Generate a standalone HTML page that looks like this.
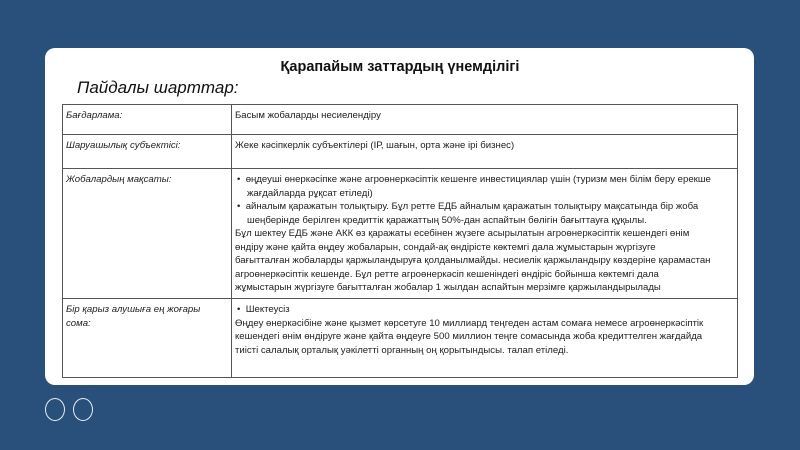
<!DOCTYPE html>
<html><head><meta charset="utf-8"><style>
*{margin:0;padding:0;box-sizing:border-box}
html,body{width:800px;height:450px;overflow:hidden}
body{background:#28507a;font-family:"Liberation Sans",sans-serif;position:relative}
.card{position:absolute;left:45px;top:48px;width:709px;height:337px;background:#fff;border-radius:10px}
h1{position:absolute;left:0;right:0;top:59px;text-align:center;font-size:14.5px;font-weight:bold;color:#111}
.sub{position:absolute;left:77px;top:78px;font-size:17px;font-style:italic;color:#111}
table{position:absolute;left:62px;top:104px;width:676px;border-collapse:collapse;font-size:9.6px;color:#222}
td{border:1px solid #555;vertical-align:top;padding:4px 3px 2px;line-height:13.5px}
td.r{padding-right:26px}
td.l{width:169px;font-style:italic;padding-right:20px}
.b{padding-left:12px;text-indent:-10px}
.c{position:absolute;top:398px;width:20px;height:23px;border:1.5px solid #e8eef5;border-radius:50%}
</style></head><body>
<div class="card"></div>
<h1>Қарапайым заттардың үнемділігі</h1>
<div class="sub">Пайдалы шарттар:</div>
<table>
<tr style="height:30px"><td class="l">Бағдарлама:</td><td class="r">Басым жобаларды несиелендіру</td></tr>
<tr style="height:34px"><td class="l">Шаруашылық субъектісі:</td><td class="r">Жеке кәсіпкерлік субъектілері (ІР, шағын, орта және ірі бизнес)</td></tr>
<tr style="height:130px"><td class="l">Жобалардың мақсаты:</td><td class="r"><div class="b">•&nbsp; өңдеуші өнеркәсіпке және агроөнеркәсіптік кешенге инвестициялар үшін (туризм мен білім беру ерекше жағдайларда рұқсат етіледі)</div><div class="b">•&nbsp; айналым қаражатын толықтыру. Бұл ретте ЕДБ айналым қаражатын толықтыру мақсатында бір жоба шеңберінде берілген кредиттік қаражаттың 50%-дан аспайтын бөлігін бағыттауға құқылы.</div>Бұл шектеу ЕДБ және АКК өз қаражаты есебінен жүзеге асырылатын агроөнеркәсіптік кешендегі өнім өндіру және қайта өңдеу жобаларын, сондай-ақ өндірісте көктемгі дала жұмыстарын жүргізуге бағытталған жобаларды қаржыландыруға қолданылмайды. несиелік қаржыландыру көздеріне қарамастан агроөнеркәсіптік кешенде. Бұл ретте агроөнеркәсіп кешеніндегі өндіріс бойынша көктемгі дала жұмыстарын жүргізуге бағытталған жобалар 1 жылдан аспайтын мерзімге қаржыландырылады</td></tr>
<tr style="height:79px"><td class="l">Бір қарыз алушыға ең жоғары сома:</td><td class="r"><div class="b">•&nbsp; Шектеусіз</div>Өңдеу өнеркәсібіне және қызмет көрсетуге 10 миллиард теңгеден астам сомаға немесе агроөнеркәсіптік кешендегі өнім өндіруге және қайта өңдеуге 500 миллион теңге сомасында жоба кредиттелген жағдайда тиісті салалық орталық уәкілетті органның оң қорытындысы. талап етіледі.</td></tr>
</table>
<div class="c" style="left:45px"></div><div class="c" style="left:73px"></div>
</body></html>
